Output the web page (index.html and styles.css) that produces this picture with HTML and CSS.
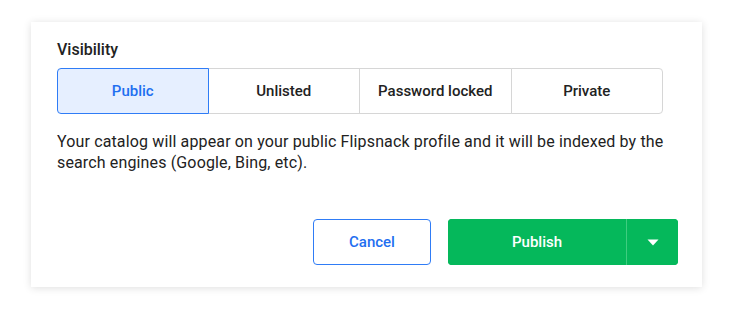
FILE: index.html
```html
<!DOCTYPE html>
<html>
<head>
<meta charset="utf-8">
<link rel="stylesheet" href="styles.css">
</head>
<body>
<div class="card">
  <div class="label">Visibility</div>
  <div class="segments">
    <div class="seg active">Public</div>
    <div class="seg">Unlisted</div>
    <div class="seg">Password locked</div>
    <div class="seg">Private</div>
  </div>
  <p class="desc">Your catalog will appear on your public Flipsnack profile and it will be indexed by the search engines (Google, Bing, etc).</p>
  <div class="footer">
    <button class="btn cancel">Cancel</button>
    <div class="split">
      <button class="btn publish">Publish</button>
      <button class="btn caret"><svg width="12" height="7" viewBox="0 0 12 7"><path d="M0.5 0.5 H11.5 L6 6.5 Z" fill="#fff"/></svg></button>
    </div>
  </div>
</div>
</body>
</html>
```
FILE: styles.css
```css
* { box-sizing: border-box; }
html, body { margin: 0; padding: 0; background: #fff; }
body {
  font-family: Roboto, "Liberation Sans", sans-serif;
  color: #222;
  padding: 22px 0 22px 31px;
  min-height: 309px;
}
.card {
  width: 671px;
  height: 265px;
  background: #fff;
  box-shadow: 0 1px 8px rgba(0,0,0,0.13);
  padding: 18px 24px 22px 26px;
  display: flex;
  flex-direction: column;
}
.label {
  font-size: 16px;
  font-weight: 500;
  line-height: 20px;
  color: #222;
}
.segments {
  margin-top: 8px;
  width: 606px;
  display: grid;
  grid-template-columns: repeat(4, 1fr);
}
.seg {
  height: 46px;
  border: 1px solid #d6d6d6;
  margin-left: -1px;
  display: flex;
  align-items: center;
  justify-content: center;
  font-size: 15px;
  font-weight: 500;
  color: #222;
  background: #fff;
}
.seg:first-child { margin-left: 0; border-radius: 4px 0 0 4px; }
.seg:last-child { border-radius: 0 4px 4px 0; }
.seg.active {
  border-color: #2f7cf6;
  background: #e6efff;
  color: #1f6ff0;
  position: relative;
  z-index: 1;
}
.desc {
  margin: 17px 0 0;
  width: 612px;
  font-size: 16px;
  line-height: 21px;
  letter-spacing: 0.14px;
  color: #222;
}
.footer {
  margin-top: auto;
  display: flex;
  justify-content: flex-end;
  gap: 17px;
}
.btn {
  font-family: inherit;
  font-size: 15px;
  font-weight: 500;
  height: 46px;
  border-radius: 4px;
  cursor: pointer;
}
.cancel {
  width: 118px;
  background: #fff;
  border: 1.5px solid #2f7cf6;
  color: #1f6ff0;
}
.split {
  display: flex;
  width: 230px;
  border-radius: 4px;
  overflow: hidden;
  background: #05b85b;
}
.publish {
  flex: 1;
  border: none;
  border-radius: 0;
  background: #05b85b;
  color: #fff;
  border-right: 1px solid #3fcd80;
}
.caret {
  width: 51px;
  border: none;
  border-radius: 0;
  background: #05b85b;
  display: flex;
  align-items: center;
  justify-content: center;
  padding: 0;
}
```
